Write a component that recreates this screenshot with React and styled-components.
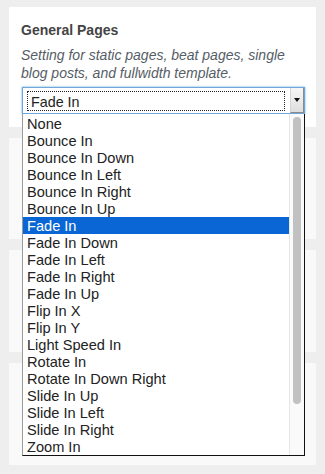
import React from "react";
import styled, { createGlobalStyle } from "styled-components";

const GlobalStyle = createGlobalStyle`
  html, body {
    margin: 0;
    padding: 0;
    background: #eeeeee;
  }
  body {
    font-family: "Liberation Sans", Arial, sans-serif;
  }
`;

const Page = styled.div`
  width: 325px;
  height: 474px;
  box-sizing: border-box;
  padding: 7px 9px;
  display: flex;
  flex-direction: column;
  gap: 11px;
  overflow: hidden;
`;

const Card = styled.section`
  flex-shrink: 0;
  box-sizing: border-box;
  height: ${(p) => p.$h}px;
  padding: 14px 11px 0 12px;
  background: ${(p) => (p.$muted ? "#f9f9f9" : "#ffffff")};
`;

const Title = styled.h3`
  margin: 0;
  font-size: 14px;
  line-height: 18px;
  font-weight: bold;
  color: #444444;
`;

const Description = styled.p`
  margin: 7px 0 5px;
  font-size: 14px;
  line-height: 18px;
  font-style: italic;
  color: #555d66;
`;

const Select = styled.div`
  position: relative;
  z-index: 2;
  margin-left: 1px;
  height: 27px;
  box-sizing: border-box;
  display: flex;
  border: 1px solid #6ea6dd;
  box-shadow: 0 0 2px rgba(30, 140, 190, 0.7);
  background: #ffffff;
`;

const Value = styled.div`
  flex: 1;
  margin: 3px 5px 2px 4px;
  padding: 1px 0 0 3px;
  border: 1px dotted #222222;
  font-size: 14.3px;
  line-height: 18px;
  color: #222222;
`;

const ArrowButton = styled.div`
  width: 14px;
  box-sizing: border-box;
  display: flex;
  align-items: center;
  justify-content: center;
  background: linear-gradient(#f6f6f6, #dedede);
  border-right: 1px solid #8a8a8a;
  border-bottom: 1px solid #8a8a8a;
  border-left: 1px solid #d4d4d4;

  &::after {
    content: "";
    border-left: 3px solid transparent;
    border-right: 3px solid transparent;
    border-top: 4px solid #111111;
  }
`;

const List = styled.div`
  position: absolute;
  top: calc(100% + 1px);
  left: -1px;
  right: -1px;
  display: flex;
  background: #ffffff;
  border-left: 1px solid #9a9a9a;
  border-right: 1px solid #111111;
  border-bottom: 1px solid #111111;
`;

const Options = styled.ul`
  flex: 1;
  margin: 0;
  padding: 1px 0 0;
  list-style: none;
`;

const Option = styled.li`
  height: 17px;
  padding-left: 4px;
  font-size: 14.6px;
  line-height: 19px;
  white-space: nowrap;
  color: ${(p) => (p.$active ? "#ffffff" : "#222222")};
  background: ${(p) => (p.$active ? "#0a66d4" : "transparent")};
`;

const Scrollbar = styled.div`
  width: 15px;
  box-sizing: border-box;
  padding: 3px 0 0 3px;
  border-left: 1px solid #e6e6e6;
  background: #fafafa;
`;

const Thumb = styled.div`
  width: 8px;
  height: 287px;
  border-radius: 4px;
  background: #c1c1c1;
`;

const options = [
  "None",
  "Bounce In",
  "Bounce In Down",
  "Bounce In Left",
  "Bounce In Right",
  "Bounce In Up",
  "Fade In",
  "Fade In Down",
  "Fade In Left",
  "Fade In Right",
  "Fade In Up",
  "Flip In X",
  "Flip In Y",
  "Light Speed In",
  "Rotate In",
  "Rotate In Down Right",
  "Slide In Up",
  "Slide In Left",
  "Slide In Right",
  "Zoom In",
];

// panels below, hidden behind the open list
const lowerCards = [101, 102, 102];

const App = () => {
  const selected = "Fade In";

  return (
    <Page>
      <GlobalStyle />
      <Card $h={120}>
        <Title>General Pages</Title>
        <Description>
          Setting for static pages, beat pages, single blog posts, and
          fullwidth template.
        </Description>
        <Select>
          <Value>{selected}</Value>
          <ArrowButton />
          <List>
            <Options>
              {options.map((o) => (
                <Option key={o} $active={o === selected}>
                  {o}
                </Option>
              ))}
            </Options>
            <Scrollbar>
              <Thumb />
            </Scrollbar>
          </List>
        </Select>
      </Card>
      {lowerCards.map((h, i) => (
        <Card key={i} $muted $h={h} />
      ))}
    </Page>
  );
};

export default App;
